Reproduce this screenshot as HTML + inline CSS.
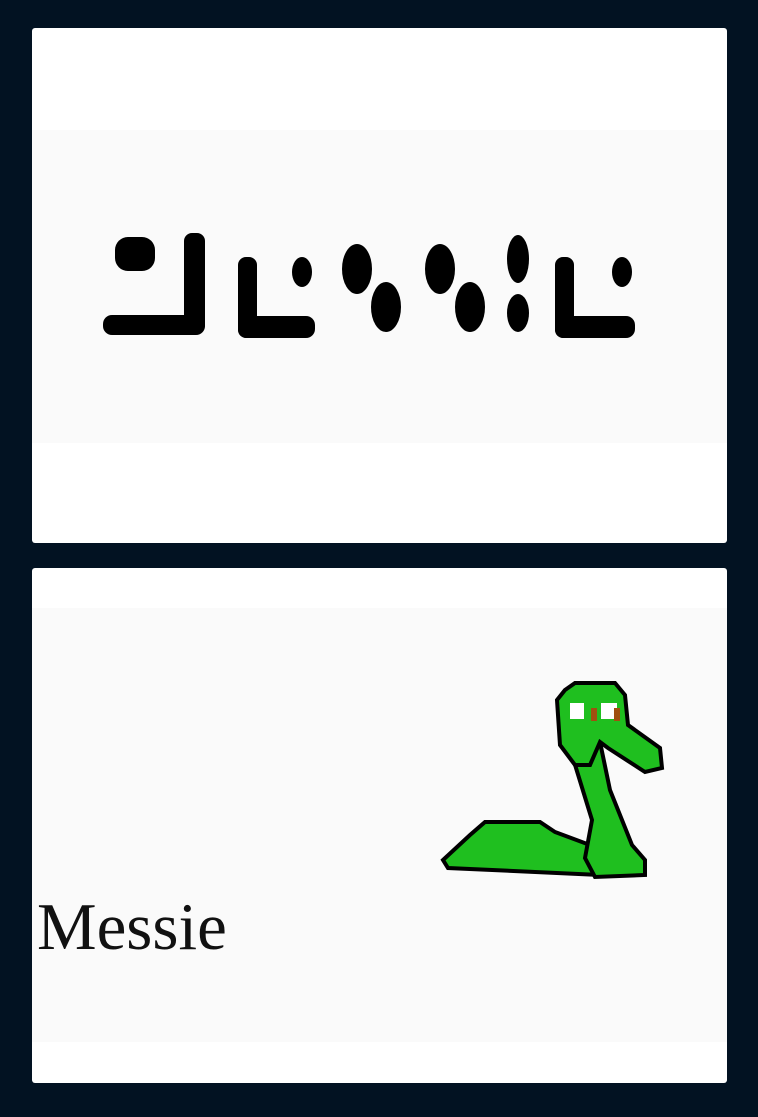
<!DOCTYPE html>
<html><head><meta charset="utf-8"><style>
html,body{margin:0;padding:0;background:#021222;width:758px;height:1117px;overflow:hidden}
.card{position:absolute;left:32px;width:695px;height:515px;background:#fff;border-radius:3px}
.in{position:absolute;left:0;width:695px;background:#fafafa}
.t{position:absolute;left:5px;top:286px;font-family:"Liberation Serif",serif;font-size:67px;color:#111;line-height:1}
</style></head><body>
<div class="card" style="top:28px"><div class="in" style="top:102px;height:313px"></div></div>
<div class="card" style="top:568px"><div class="in" style="top:40px;height:434px"><div class="t">Messie</div></div></div>
<svg width="758" height="1117" style="position:absolute;left:0;top:0">
<g fill="#000">
<rect x="115" y="237" width="40" height="34" rx="13"/>
<rect x="184" y="233" width="21" height="100" rx="8"/>
<rect x="103" y="315" width="102" height="20" rx="9"/>
<rect x="238" y="257" width="19" height="81" rx="8"/>
<rect x="238" y="316" width="77" height="22" rx="9"/>
<ellipse cx="302" cy="272" rx="10" ry="15"/>
<ellipse cx="357" cy="269" rx="15" ry="25"/>
<ellipse cx="386" cy="307" rx="15" ry="25"/>
<ellipse cx="440" cy="269" rx="15" ry="25"/>
<ellipse cx="470" cy="307" rx="15" ry="25"/>
<ellipse cx="518" cy="259" rx="11" ry="24"/>
<ellipse cx="518" cy="313" rx="11" ry="19"/>
<rect x="555" y="257" width="19" height="81" rx="8"/>
<rect x="555" y="316" width="80" height="22" rx="9"/>
<ellipse cx="622" cy="272" rx="10" ry="15"/>
</g>
<g fill="#1fbf1f" stroke="#000" stroke-width="4" stroke-linejoin="miter">
<path d="M443,860 L470,835 L485,822 L540,822 L555,832 L590,845 L600,875 L448,868 Z"/>
<path d="M572,755 L600,742 L610,790 L632,845 L645,860 L645,875 L595,877 L585,858 L592,820 Z"/>
<path d="M565,690 L575,683 L615,683 L625,695 L628,725 L660,748 L662,768 L645,772 L608,748 L600,742 L590,765 L575,765 L560,745 L557,700 Z"/>
</g>
<rect x="570" y="703" width="14" height="16" fill="#fff"/>
<rect x="601" y="703" width="16" height="16" fill="#fff"/>
<rect x="591" y="708" width="6" height="13" fill="#a05010"/>
<rect x="614" y="708" width="6" height="13" fill="#a05010"/>
</svg>
</body></html>
